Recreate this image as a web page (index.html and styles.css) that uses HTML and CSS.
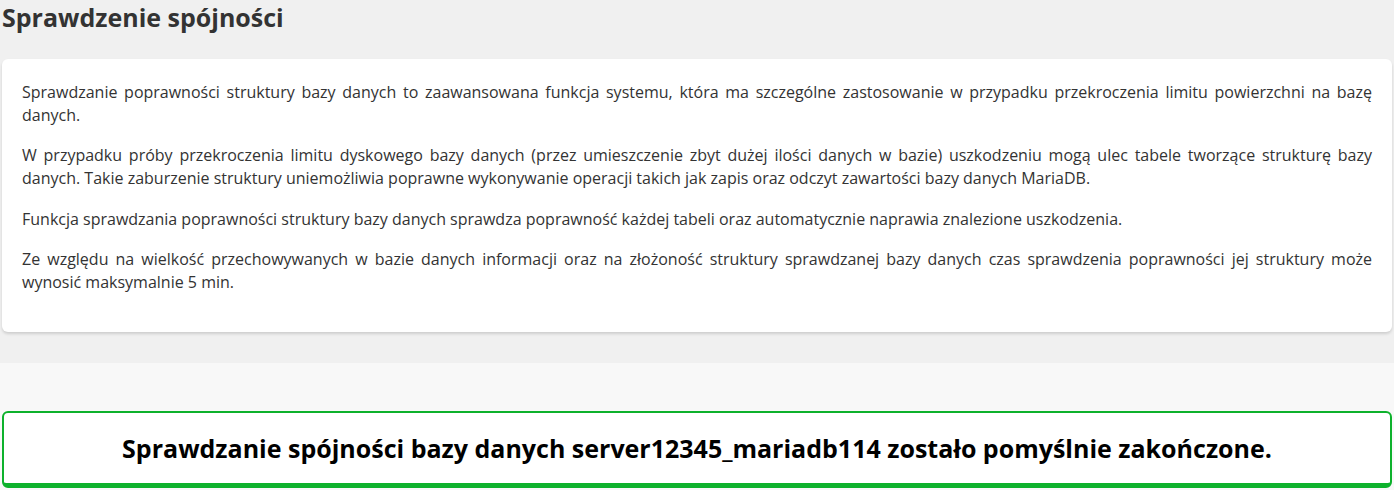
FILE: index.html
```html
<!DOCTYPE html>
<html lang="pl">
<head>
<meta charset="utf-8">
<link rel="stylesheet" href="styles.css">
</head>
<body>
<div class="top">
  <h1 class="title">Sprawdzenie spójności</h1>
  <div class="card">
    <p>Sprawdzanie poprawności struktury bazy danych to zaawansowana funkcja systemu, która ma szczególne zastosowanie w przypadku przekroczenia limitu powierzchni na bazę danych.</p>
    <p>W przypadku próby przekroczenia limitu dyskowego bazy danych (przez umieszczenie zbyt dużej ilości danych w bazie) uszkodzeniu mogą ulec tabele tworzące strukturę bazy danych. Takie zaburzenie struktury uniemożliwia poprawne wykonywanie operacji takich jak zapis oraz odczyt zawartości bazy danych MariaDB.</p>
    <p>Funkcja sprawdzania poprawności struktury bazy danych sprawdza poprawność każdej tabeli oraz automatycznie naprawia znalezione uszkodzenia.</p>
    <p>Ze względu na wielkość przechowywanych w bazie danych informacji oraz na złożoność struktury sprawdzanej bazy danych czas sprawdzenia poprawności jej struktury może wynosić maksymalnie 5 min.</p>
  </div>
</div>
<div class="bottom">
  <div class="success">Sprawdzanie spójności bazy danych server12345_mariadb114 zostało pomyślnie zakończone.</div>
</div>
</body>
</html>
```
FILE: styles.css
```css
html, body {
  margin: 0;
  padding: 0;
}
body {
  font-family: "Open Sans", "Liberation Sans", sans-serif;
  background: #f8f8f8;
  color: #333;
}
.top {
  background: #f0f0f0;
  padding: 0 2px 31px;
}
.title {
  margin: 0;
  padding: 1px 0 0;
  font-size: 25px;
  line-height: 32px;
  font-weight: 700;
  color: #333;
  height: 59px;
  box-sizing: border-box;
}
.card {
  background: #fff;
  border-radius: 6px;
  box-shadow: 0 2px 3px rgba(0, 0, 0, 0.14);
  padding: 22px 20px 4px;
}
.card p {
  margin: 0 0 17.6px;
  font-size: 16px;
  line-height: 22.86px;
  text-align: justify;
  color: #333;
}
.card p:last-child {
  margin-bottom: 34px;
}
.bottom {
  padding: 48px 2px 0;
}
.success {
  background: #fff;
  border: 2px solid #0db12c;
  border-bottom-width: 5px;
  border-radius: 6px;
  box-sizing: border-box;
  height: 77px;
  display: flex;
  align-items: center;
  justify-content: center;
  font-size: 25px;
  font-weight: 700;
  color: #000;
  padding-top: 1px;
}
```
